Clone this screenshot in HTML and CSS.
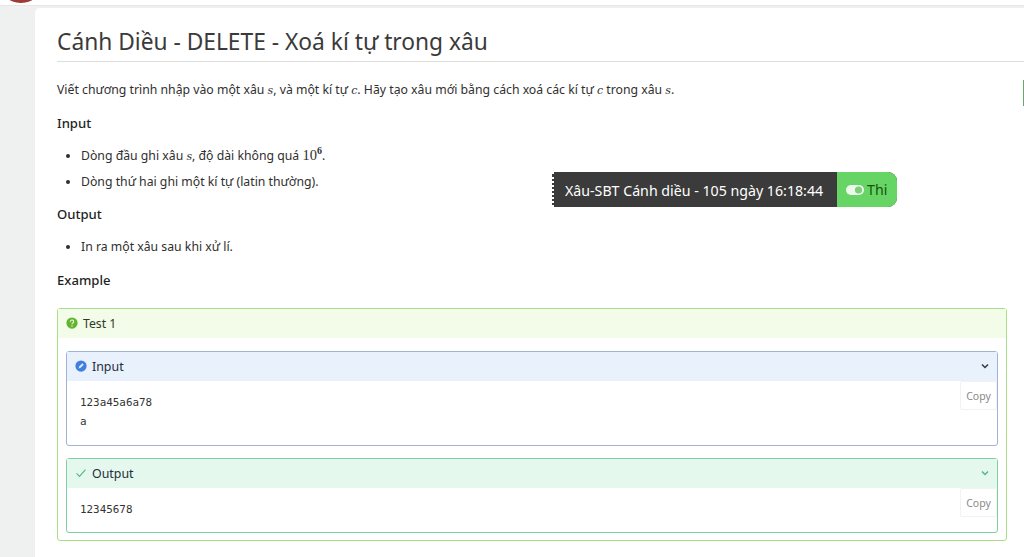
FILE: index.html
```html
<!DOCTYPE html>
<html lang="vi">
<head>
<meta charset="utf-8">
<title>Cánh Diều - DELETE - Xoá kí tự trong xâu</title>
<link rel="stylesheet" href="styles.css">
</head>
<body>
<header class="topbar"><span class="avatar"></span></header>
<div class="shell">
  <main class="card">
    <h1 class="title">Cánh Diều - DELETE - Xoá kí tự trong xâu</h1>
    <p class="lead">Viết chương trình nhập vào một xâu <i class="math">s</i>, và một kí tự <i class="math">c</i>. Hãy tạo xâu mới bằng cách xoá các kí tự <i class="math">c</i> trong xâu <i class="math">s</i>.</p>
    <h2 class="heading">Input</h2>
    <ul class="list">
      <li>Dòng đầu ghi xâu <i class="math">s</i>, độ dài không quá <span class="num">10<sup>6</sup></span>.</li>
      <li>Dòng thứ hai ghi một kí tự (latin thường).</li>
    </ul>
    <h2 class="heading">Output</h2>
    <ul class="list">
      <li>In ra một xâu sau khi xử lí.</li>
    </ul>
    <h2 class="heading heading-example">Example</h2>
    <section class="test">
      <div class="test-head">
        <svg class="ico" viewBox="0 0 16 16"><circle cx="8" cy="8" r="7.5" fill="#62b52f"/><path d="M5.8 6.2a2.2 2.2 0 1 1 3.3 1.9c-.8.5-1.1.8-1.1 1.6" fill="none" stroke="#e8f5dc" stroke-width="1.6"/><circle cx="8" cy="12" r="1" fill="#e8f5dc"/></svg>
        <span>Test 1</span>
      </div>
      <div class="test-body">
        <div class="box box-in">
          <div class="box-head">
            <svg class="ico" viewBox="0 0 16 16"><circle cx="8" cy="8" r="7.5" fill="#3f7fe0"/><path d="M4.8 11.2l1-2.8 4-4 1.8 1.8-4 4z" fill="#dfeafc"/></svg>
            <span class="box-title">Input</span>
            <svg class="chev" viewBox="0 0 10 10"><path d="M2 3.5l3 3 3-3" fill="none" stroke="#2c3a4a" stroke-width="1.5"/></svg>
          </div>
          <div class="box-body">
            <button class="copy">Copy</button>
            <pre class="code">123a45a6a78
a</pre>
          </div>
        </div>
        <div class="box box-out">
          <div class="box-head">
            <svg class="ico" viewBox="0 0 16 16"><path d="M2 8.5l4 4 8-9" fill="none" stroke="#52b788" stroke-width="1.5"/></svg>
            <span class="box-title">Output</span>
            <svg class="chev" viewBox="0 0 10 10"><path d="M2 3.5l3 3 3-3" fill="none" stroke="#52b788" stroke-width="1.5"/></svg>
          </div>
          <div class="box-body">
            <button class="copy">Copy</button>
            <pre class="code">12345678</pre>
          </div>
        </div>
      </div>
    </section>
  </main>
</div>
<div class="timer">
  <span class="timer-text">Xâu-SBT Cánh diều - 105 ngày 16:18:44</span>
  <span class="timer-btn">
    <svg class="toggle" viewBox="0 0 18 12"><rect x="0" y="1" width="18" height="10" rx="5" fill="#eef8ea"/><circle cx="12.5" cy="6" r="3.6" fill="#7bcf79"/></svg>
    <span>Thi</span>
  </span>
</div>
<span class="edge-mark"></span>
</body>
</html>
```
FILE: styles.css
```css
* { box-sizing: border-box; }
html, body { margin: 0; height: 557px; overflow: hidden; }
body { background: #eff1f0; font-family: "Noto Sans", sans-serif; color: #2f2f2f; font-size: 12.25px; }
.topbar { height: 6px; background: #fff; border-bottom: 1px solid #e6e6e6; position: relative; overflow: hidden; }
.avatar { position: absolute; left: -2px; top: -43px; width: 46px; height: 46px; border-radius: 50%; background: #a03a36; }
.shell { padding: 2px 0 0 35px; }
.card { background: #fff; height: 560px; border-radius: 5px 0 0 0; padding: 16px 17px 0 22px; }
.title { margin: 0 -17px 0 0; font-size: 22.75px; font-weight: 400; line-height: 36px; height: 38px; border-bottom: 1px solid #dedede; color: #3a3a3a; }
.lead { margin: 18px 0 0; line-height: 20px; }
.heading { margin: 13px 0 0; font-size: 13.1px; font-weight: 500; line-height: 20px; color: #1f1f1f; }
.list { margin: 13px 0 0; padding: 0 0 0 24px; }
.list li { line-height: 20px; margin-bottom: 6px; }
.list + .heading { margin-top: 12px; }
.math { font-family: "DejaVu Serif", serif; font-style: italic; font-size: 11px; line-height: 0; }
.num { font-family: "Liberation Serif", serif; font-size: 14.5px; line-height: 0; }
.num sup { font-size: 10px; line-height: 0; font-weight: 700; }
.list + .heading-example { margin-top: 13px; }
.test { margin-top: 18px; border: 1px solid #a9dd87; border-radius: 3px; height: 233px; }
.test-head { display: flex; align-items: center; gap: 5px; height: 29px; padding: 0 0 1px 8px; background: #f2fce9; color: #2c3a2a; }
.ico { width: 12px; height: 12px; flex: none; }
.test-body { padding: 13px 8px 0; display: flex; flex-direction: column; gap: 12px; }
.box { border: 1px solid; border-radius: 3px; }
.box-in { border-color: #9db4d8; height: 95px; }
.box-out { border-color: #7ecfa6; height: 75px; }
.box-head { display: flex; align-items: center; gap: 5px; height: 29px; padding: 0 7px 1px 8px; font-size: 12.4px; color: #23303c; }
.box-in .box-head { background: #e9f1fd; }
.box-out .box-head { background: #e5f8ee; }
.box-title { flex: 1; }
.chev { width: 10px; height: 10px; flex: none; }
.box-body { position: relative; padding: 12px 13px; }
.code { margin: 0; font-family: "DejaVu Sans Mono", monospace; font-size: 10.9px; line-height: 19px; color: #333; }
.copy { position: absolute; top: 0; right: 0; width: 37px; height: 29px; padding: 0; border: 1px solid #f2f2f2; border-radius: 2px; background: #fff; font: 10.5px "Noto Sans", sans-serif; color: #8a8a8a; }
.timer { position: absolute; left: 552px; top: 172px; display: flex; height: 35px; width: 345px; background: #3b3b3b; border-radius: 0 9px 9px 0; }
.timer::before { content: ""; position: absolute; left: 0; top: 0; bottom: 0; border-left: 2px dotted #fff; }
.timer-text { flex: none; width: 285px; color: #fff; font-size: 14.2px; line-height: 38px; padding-left: 13px; white-space: nowrap; }
.timer-btn { flex: 1; display: flex; align-items: center; gap: 3px; padding-left: 9px; background: #67d565; color: #14540f; font-size: 14.2px; border-radius: 0 9px 9px 0; }
.toggle { width: 18px; height: 12px; }
.edge-mark { position: absolute; right: 0; top: 80px; width: 1px; height: 26px; background: #6aa86a; }
```
